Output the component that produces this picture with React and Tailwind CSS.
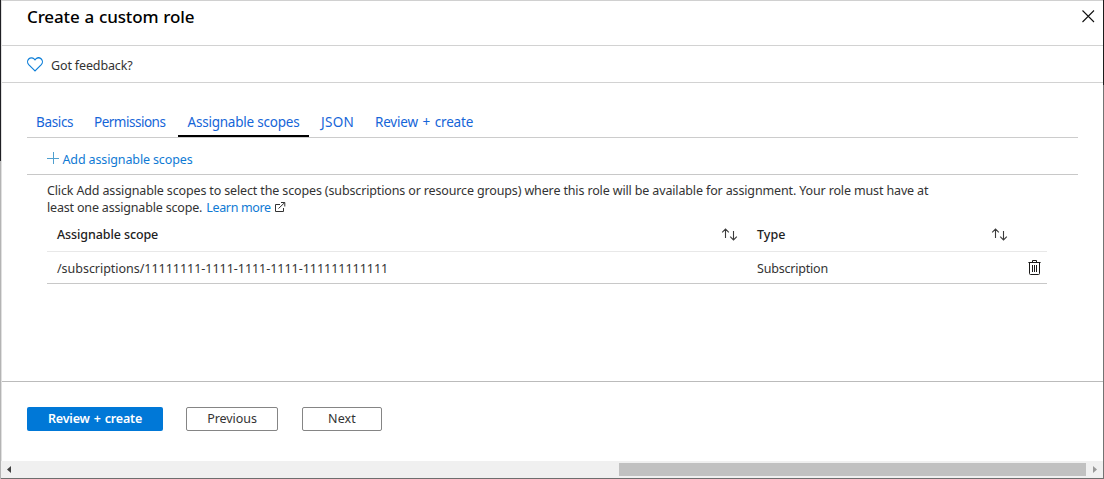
import React from "react";

const tabs = [
  { label: "Basics", cls: "w-[58px] pl-[9px] tracking-[-0.35px]" },
  { label: "Permissions", cls: "w-[93px] pl-[9px] tracking-[-0.5px]" },
  { label: "Assignable scopes", cls: "w-[131px] border-b-2 border-black pl-[9.5px] tracking-[-0.22px]" },
  { label: "JSON", cls: "w-[57px] pl-[12px] tracking-[0.3px]" },
  { label: "Review + create", cls: "w-[116px] pl-[9px] tracking-[-0.2px] [word-spacing:1.4px]" },
];

function Sort() {
  return (
    <svg className="block" width="17" height="13" viewBox="0 0 17 13" fill="none" stroke="#3c3c3c" strokeWidth="1.1">
      <path d="M4.500 10V1M1.200 4.300L4.500 1L7.800 4.300M12.500 3V12M9.200 8.700L12.500 12L15.800 8.700" />
    </svg>
  );
}

function Heart() {
  return (
    <svg className="block" width="16" height="15" viewBox="0 0 16 15" fill="none" stroke="#0f7fd8" strokeWidth="1.2">
      <path d="M8 13.900L1.700 7.600C.2 6 .3 3.400 1.700 2C3.300.400 5.600.400 7.100 1.900L8 2.800L8.900 1.900C10.400.400 12.700.400 14.300 2C15.700 3.400 15.800 6 14.300 7.600Z" />
    </svg>
  );
}

function Trash() {
  return (
    <svg className="block" width="13" height="15" viewBox="0 0 13 15" fill="none" stroke="#1b1a19">
      <path d="M.4 2.500H12.600M4.500 2.500V.500H8.500V2.500M1.500 2.500V13.500Q1.500 14.500 2.500 14.500H10.500Q11.500 14.500 11.500 13.500V2.500" />
      <path d="M4.500 5V12M6.500 5V12M8.500 5V12" />
    </svg>
  );
}

function External() {
  return (
    <svg className="block" width="11" height="11" viewBox="0 0 11 11" fill="none" stroke="#333">
      <path d="M5 2.500H.500V9.500H8.500V6M3.500 6.500L9.500 .800M6 .500H9.800V4.500" />
    </svg>
  );
}

export default function App() {
  return (
    <div className="flex h-[479px] w-[1104px] overflow-hidden bg-white font-['Noto_Sans','Open_Sans',sans-serif] text-[12.5px] leading-[17px] text-[#333]">
      <div className="flex w-px shrink-0 flex-col">
        <div className="h-[161px] bg-[#1f1f23]" />
        <div className="flex-1 bg-[#b4b4b4]" />
      </div>
      <div className="flex w-[1102px] shrink-0 flex-col whitespace-nowrap border-b border-t border-b-[#6e6e6e] border-t-[#d0d0d0]">
        <div className="flex h-[460px] flex-col border-l border-[#e0e0e0]">
          <header className="flex h-[45px] items-start justify-between border-b border-[#d2d2d2] pl-[25px] pr-[8px]">
            <h1 className="pt-[4px] text-[17px] font-medium leading-[24px] tracking-[-0.15px] text-black [word-spacing:0.7px]">Create a custom role</h1>
            <svg className="mt-[9px]" width="13" height="13" viewBox="0 0 13 13" stroke="#111" strokeWidth="1.1">
              <path d="M.5.500L12 12M12 .500L.500 12" />
            </svg>
          </header>
          <div className="flex h-[37px] items-start border-b border-[#d2d2d2] pl-[25px] pt-[11px]">
            <Heart />
            <span className="ml-[8px] leading-[17px] tracking-[-0.14px]">Got feedback?</span>
          </div>

          <main className="flex h-[298px] flex-col pl-[25px] pr-[25px] pt-[25px]">
            <nav className="flex h-[30px] shrink-0 border-b border-[#ccc] text-[13.5px] leading-[29px] text-[#1565d8]">
              {tabs.map((t) => (
                <div key={t.label} className={`${t.cls} h-[29px] shrink-0`}>
                  {t.label}
                </div>
              ))}
            </nav>
            <div className="flex h-[37px] shrink-0 items-center border-b border-[#c8c8c8] pl-[20px] pt-[7px] text-[#0f7ad4]">
              <svg className="mb-[4px]" width="12" height="12" viewBox="0 0 12 12" stroke="#4f9fcf">
                <path d="M0 6.500H12M6.500 0V12" />
              </svg>
              <span className="ml-[3.5px] tracking-[-0.13px]">Add assignable scopes</span>
            </div>
            <div className="pl-[20px] pt-[7px] leading-[17px] tracking-[-0.14px]">
              <p>Click Add assignable scopes to select the scopes (subscriptions or resource groups) where this role will be available for assignment. Your role must have at</p>
              <p className="flex items-center">
                <span className="tracking-[-0.18px]">least one assignable scope.</span>
                <a className="ml-[4px] mr-[4px] tracking-[-0.35px] text-[#0f7ad4]">Learn more</a>
                <External />
              </p>
            </div>
            <div className="ml-[20px] flex w-[1000px] flex-col">
              <div className="flex h-[36px] items-center border-b border-[#e8e8e8] pt-[2px] text-[#222]">
                <div className="flex w-[700px] items-center justify-between pl-[10px] pr-[9px]">
                  <span className="font-medium tracking-[-0.1px]">Assignable scope</span>
                  <Sort />
                </div>
                <div className="flex w-[262px] items-center justify-between pl-[10px] pr-px">
                  <span className="font-medium">Type</span>
                  <Sort />
                </div>
              </div>
              <div className="flex h-[32px] items-center border-b border-[#c8c8c8]">
                <span className="w-[700px] pl-[10px] pt-[2px] tracking-[-0.03px]">/subscriptions/11111111-1111-1111-1111-111111111111</span>
                <span className="w-[281px] pl-[10px] pt-[2px] tracking-[-0.2px]">Subscription</span>
                <Trash />
              </div>
            </div>
          </main>

          <footer className="flex h-[80px] items-start border-t border-[#bbb] pl-[25px] pt-[25px] leading-[22px]">
            <button className="h-[24px] w-[136px] rounded-[2px] bg-[#0078d7] font-semibold leading-[24px] tracking-[-0.2px] text-white [word-spacing:1px]">Review + create</button>
            <button className="ml-[23px] h-[24px] w-[92px] rounded-[2px] border border-[#858585] tracking-[-0.05px]">Previous</button>
            <button className="ml-[24px] h-[24px] w-[80px] rounded-[2px] border border-[#858585] tracking-[0.15px]">Next</button>
          </footer>
        </div>
        <div className="flex h-[17px] items-center justify-between bg-[#f0f0f0] pl-[6px] pr-[6px]">
          <svg width="4" height="7" viewBox="0 0 4 7" fill="#404040"><path d="M4 0V7L0 3.500Z" /></svg>
          <div className="ml-auto mr-[7px] h-[13px] w-[467px] bg-[#c1c1c1]" />
          <svg width="4" height="7" viewBox="0 0 4 7" fill="#999"><path d="M0 0V7L4 3.500Z" /></svg>
        </div>
      </div>
      <div className="flex w-px shrink-0 flex-col">
        <div className="h-[85px] bg-[#1c1c1c]" />
        <div className="flex-1 bg-[#737373]" />
      </div>
    </div>
  );
}
